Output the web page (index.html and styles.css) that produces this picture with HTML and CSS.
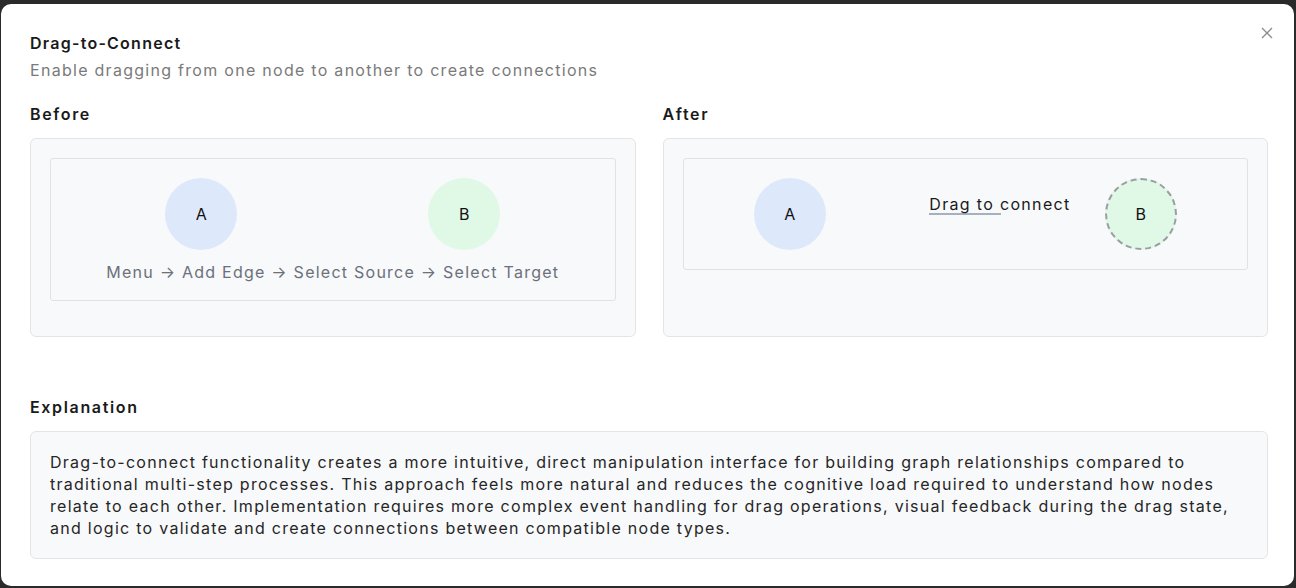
FILE: index.html
```html
<!DOCTYPE html>
<html lang="en">
<head>
<meta charset="utf-8">
<title>Drag-to-Connect</title>
<link rel="stylesheet" href="styles.css">
</head>
<body>
<div class="modal">
  <button class="close" aria-label="Close">
    <svg width="12" height="12" viewBox="0 0 12 12"><path d="M1 1L11 11M11 1L1 11" stroke="#8a8a8a" stroke-width="1.3" fill="none"/></svg>
  </button>
  <h1 class="title">Drag-to-Connect</h1>
  <p class="subtitle">Enable dragging from one node to another to create connections</p>

  <div class="compare">
    <section class="col">
      <h2 class="heading">Before</h2>
      <div class="panel">
        <div class="canvas canvas-before">
          <div class="nodes">
            <div class="node node-a">A</div>
            <div class="node node-b">B</div>
          </div>
          <div class="steps">Menu → Add Edge → Select Source → Select Target</div>
        </div>
      </div>
    </section>
    <section class="col">
      <h2 class="heading">After</h2>
      <div class="panel">
        <div class="canvas canvas-after">
          <div class="node node-a">A</div>
          <div class="drag">
            <div class="drag-line"></div>
            <span class="drag-label">Drag to connect</span>
          </div>
          <div class="node node-b dashed">B</div>
        </div>
      </div>
    </section>
  </div>

  <h2 class="heading explain-heading">Explanation</h2>
  <div class="explain">
    Drag-to-connect functionality creates a more intuitive, direct manipulation interface for building graph relationships compared to traditional multi-step processes. This approach feels more natural and reduces the cognitive load required to understand how nodes relate to each other. Implementation requires more complex event handling for drag operations, visual feedback during the drag state, and logic to validate and create connections between compatible node types.
  </div>
</div>
</body>
</html>
```

FILE: styles.css
```css
* { box-sizing: border-box; }
html, body { margin: 0; padding: 0; }
body {
  background: #2a2a2a;
  font-family: Inter, "Noto Sans", "Liberation Sans", sans-serif;
  height: 588px;
  overflow: hidden;
  padding: 4px 2px 2px 1px;
}
.modal {
  position: relative;
  background: #ffffff;
  border-radius: 10px;
  height: 582px;
  padding: 27px 26px 0 29px;
}
.close {
  position: absolute;
  top: 22px;
  right: 20px;
  width: 14px;
  height: 14px;
  padding: 0;
  border: 0;
  background: none;
  display: flex;
  align-items: center;
  justify-content: center;
}
.title {
  margin: 0;
  font-size: 16px;
  line-height: 24px;
  font-weight: 600;
  letter-spacing: 1.25px;
  color: #1a1a1a;
}
.subtitle {
  margin: 3px 0 0;
  font-size: 16px;
  line-height: 24px;
  letter-spacing: 1.28px;
  color: #7a7a7a;
}
.compare {
  display: grid;
  grid-template-columns: 1fr 1fr;
  column-gap: 27px;
  margin-top: 20px;
}
.heading {
  margin: 0 0 12px;
  font-size: 16px;
  line-height: 24px;
  font-weight: 600;
  letter-spacing: 1.65px;
  color: #1a1a1a;
}
.panel {
  height: 199px;
  background: #f8f9fb;
  border: 1px solid #e3e4e6;
  border-radius: 6px;
  padding: 19px;
}
.canvas {
  background: #f8f9fb;
  border: 1px solid #e1e2e4;
  border-radius: 3px;
  padding: 19px;
}
.canvas-before { padding-bottom: 16px; }
.nodes {
  display: flex;
  justify-content: space-around;
}
.node {
  width: 72px;
  height: 72px;
  border-radius: 50%;
  display: flex;
  align-items: center;
  justify-content: center;
  font-size: 16px;
  color: #111;
  flex: none;
}
.node-a { background: #dee8fb; }
.node-b { background: #e0f8e6; }
.dashed { border: 2px dashed #9a9da3; }
.steps {
  margin-top: 10px;
  text-align: center;
  font-size: 16px;
  line-height: 24px;
  letter-spacing: 1.25px;
  color: #6c707a;
}
.canvas-after {
  display: flex;
  align-items: center;
  justify-content: space-around;
}
.drag {
  position: relative;
  width: 74px;
  height: 2px;
  flex: none;
}
.drag-line {
  margin: 0 1px;
  height: 2px;
  background: #a7b0be;
}
.drag-label {
  position: absolute;
  left: 1px;
  top: -21px;
  white-space: nowrap;
  font-size: 16px;
  line-height: 24px;
  letter-spacing: 1.33px;
  color: #1a1a1a;
}
.explain-heading {
  margin-top: 58px;
}
.explain {
  background: #f8f9fb;
  border: 1px solid #e3e4e6;
  border-radius: 6px;
  padding: 19px;
  font-size: 16px;
  line-height: 22px;
  letter-spacing: 1.27px;
  color: #262626;
}
```
